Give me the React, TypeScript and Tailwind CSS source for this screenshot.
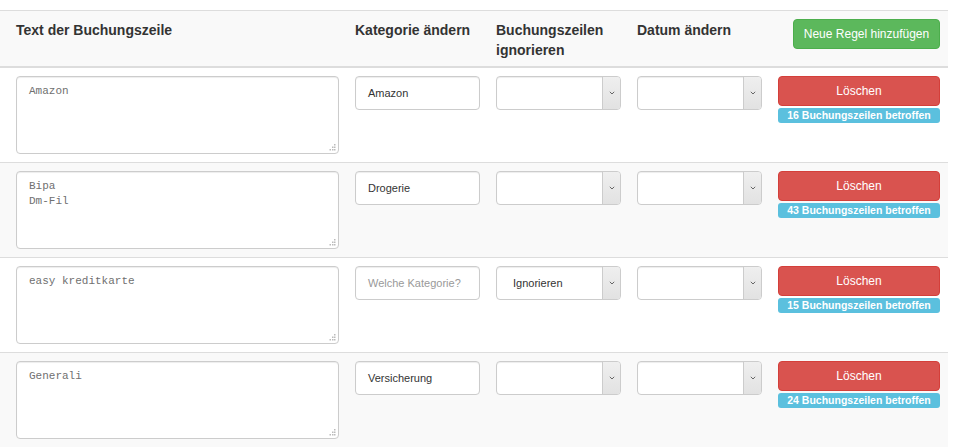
import React from "react";

const rows = [
  { text: "Amazon", cat: "Amazon", ignore: "", count: 16 },
  { text: "Bipa\nDm-Fil", cat: "Drogerie", ignore: "", count: 43 },
  { text: "easy kreditkarte", cat: "", ignore: "Ignorieren", count: 15 },
  { text: "Generali", cat: "Versicherung", ignore: "", count: 24 },
];

const sans = { fontFamily: '"Liberation Sans", Arial, Helvetica, sans-serif' };

function Grip() {
  return (
    <svg className="absolute right-[3px] bottom-[3px]" width="7" height="7" viewBox="0 0 7 7">
      <rect x="5" y="0" width="1.5" height="1.5" fill="#bbb" />
      <rect x="3" y="2.5" width="1.5" height="1.5" fill="#bbb" />
      <rect x="5" y="2.5" width="1.5" height="1.5" fill="#bbb" />
      <rect x="0.5" y="5" width="1.5" height="1.5" fill="#bbb" />
      <rect x="3" y="5" width="1.5" height="1.5" fill="#bbb" />
      <rect x="5" y="5" width="1.5" height="1.5" fill="#bbb" />
    </svg>
  );
}

function Select({ value }: { value: string }) {
  return (
    <div className="flex h-[34px] w-[125px] overflow-hidden rounded-[4px] border border-[#ccc] bg-white shadow-[inset_0_1px_1px_rgba(0,0,0,0.075)]">
      <div className="flex flex-1 items-center pl-[16px] text-[11px] text-[#333]">{value}</div>
      <div className="flex w-[18px] items-center justify-center border-l border-[#ccc] bg-gradient-to-b from-[#efefef] to-[#e2e2e2]">
        <svg width="6" height="4" viewBox="0 0 6 4">
          <path d="M0.8 0.8 L3 3 L5.2 0.8" fill="none" stroke="#666" strokeWidth="1" />
        </svg>
      </div>
    </div>
  );
}

export default function App() {
  return (
    <div className="h-[448px] w-[957px] overflow-hidden bg-white pt-[10px]" style={sans}>
      <div className="w-[948px]">
        <div className="flex gap-[16px] border-t border-b-2 border-[#ddd] bg-[#f9f9f9] pt-[9px] pb-[6px] pl-[16px] pr-[8px] text-[14px] leading-[20px] font-bold text-[#333]">
          <div className="h-[40px] w-[323px]">Text der Buchungszeile</div>
          <div className="w-[125px] whitespace-nowrap">Kategorie ändern</div>
          <div className="w-[125px]">Buchungszeilen ignorieren</div>
          <div className="w-[125px]">Datum ändern</div>
          <div className="flex w-[162px] justify-end">
            <button className="-mt-[1px] h-[30px] w-[147px] rounded-[4px] border border-[#4cae4c] bg-[#5cb85c] text-[12px] font-normal text-white">
              Neue Regel hinzufügen
            </button>
          </div>
        </div>
        {rows.map((r, i) => (
          <div
            key={i}
            className={`flex gap-[16px] pt-[8px] pb-[8px] pl-[16px] pr-[8px] ${i > 0 ? "border-t border-[#ddd]" : ""} ${i % 2 === 1 ? "bg-[#f9f9f9]" : "bg-white"}`}
          >
            <div className="relative h-[78px] w-[323px]">
              <textarea
                readOnly
                value={r.text}
                className="h-full w-full resize-none rounded-[4px] border border-[#ccc] bg-white px-[12px] pt-[7px] pb-[8px] text-[11px] leading-[15px] text-[#707070] shadow-[inset_0_1px_1px_rgba(0,0,0,0.075)] outline-none"
                style={{ fontFamily: '"Liberation Mono", "Courier New", monospace' }}
              />
              <Grip />
            </div>
            <div className="flex h-[34px] w-[125px] items-center rounded-[4px] border border-[#ccc] bg-white px-[12px] text-[11px] shadow-[inset_0_1px_1px_rgba(0,0,0,0.075)]">
              {r.cat ? (
                <span className="text-[#333]">{r.cat}</span>
              ) : (
                <span className="text-[#999]">Welche Kategorie?</span>
              )}
            </div>
            <Select value={r.ignore} />
            <Select value="" />
            <div className="flex w-[162px] flex-col">
              <button className="h-[30px] w-full rounded-[4px] border border-[#d43f3a] bg-[#d9534f] text-[12px] text-white">
                Löschen
              </button>
              <div className="mt-[2px] flex h-[15px] items-center justify-center rounded-[3px] bg-[#5bc0de] text-[10.5px] font-bold text-white">
                {r.count} Buchungszeilen betroffen
              </div>
            </div>
          </div>
        ))}
      </div>
    </div>
  );
}
